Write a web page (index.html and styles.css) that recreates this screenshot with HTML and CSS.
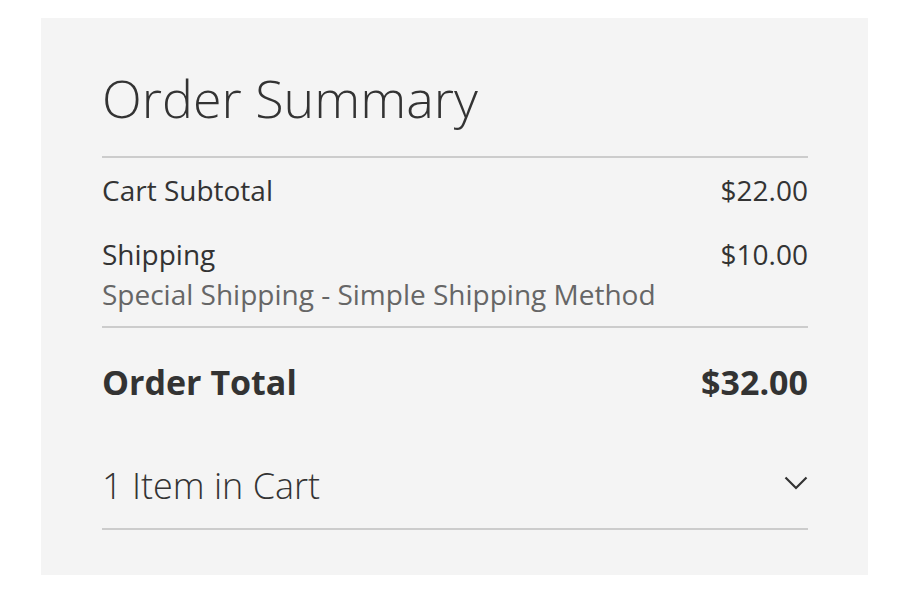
FILE: index.html
```html
<!DOCTYPE html>
<html lang="en">
<head>
<meta charset="utf-8">
<title>Order Summary</title>
<link rel="stylesheet" href="styles.css">
</head>
<body>
<div class="summary">
  <h2 class="title">Order Summary</h2>
  <div class="totals">
    <div class="row">
      <div class="label">Cart Subtotal</div>
      <div class="amount">$22.00</div>
    </div>
    <div class="row shipping">
      <div class="label">Shipping<div class="method">Special Shipping - Simple Shipping Method</div></div>
      <div class="amount">$10.00</div>
    </div>
  </div>
  <div class="row grand">
    <div class="label">Order Total</div>
    <div class="amount">$32.00</div>
  </div>
  <div class="items">
    <span class="items-title">1 Item in Cart</span>
    <svg class="chevron" width="24" height="14" viewBox="0 0 24 14" aria-hidden="true"><path d="M1.5 1.5 L12 12 L22.5 1.5" fill="none" stroke="#333" stroke-width="2.2"/></svg>
  </div>
</div>
</body>
</html>
```
FILE: styles.css
```css
html, body {
  margin: 0;
  padding: 0;
  background: #fff;
}
body {
  font-family: "Open Sans", "Liberation Sans", sans-serif;
  color: #333;
}
.summary {
  box-sizing: border-box;
  width: 827px;
  height: 557px;
  margin: 18px 0 0 41px;
  padding: 0 60px 0 61px;
  background: #f4f4f4;
  overflow: hidden;
}
.title {
  margin: 0;
  padding-top: 48px;
  padding-bottom: 26px;
  font-size: 52px;
  font-weight: 300;
  line-height: 64px;
  border-bottom: 2px solid #ccc;
}
.totals {
  display: flex;
  flex-direction: column;
  gap: 24px;
  padding: 12px 0 12px;
  border-bottom: 2px solid #ccc;
}
.row {
  display: flex;
  justify-content: space-between;
  align-items: flex-start;
  font-size: 28px;
  line-height: 40px;
}
.method {
  color: #666;
}
.grand {
  padding-top: 32px;
  font-size: 34px;
  font-weight: 700;
  line-height: 44px;
}
.items {
  display: flex;
  justify-content: space-between;
  align-items: center;
  padding: 57px 0 17px;
  border-bottom: 2px solid #ccc;
}
.items-title {
  font-size: 36px;
  font-weight: 300;
  line-height: 50px;
}
.chevron {
  margin-top: -6px;
}
```
